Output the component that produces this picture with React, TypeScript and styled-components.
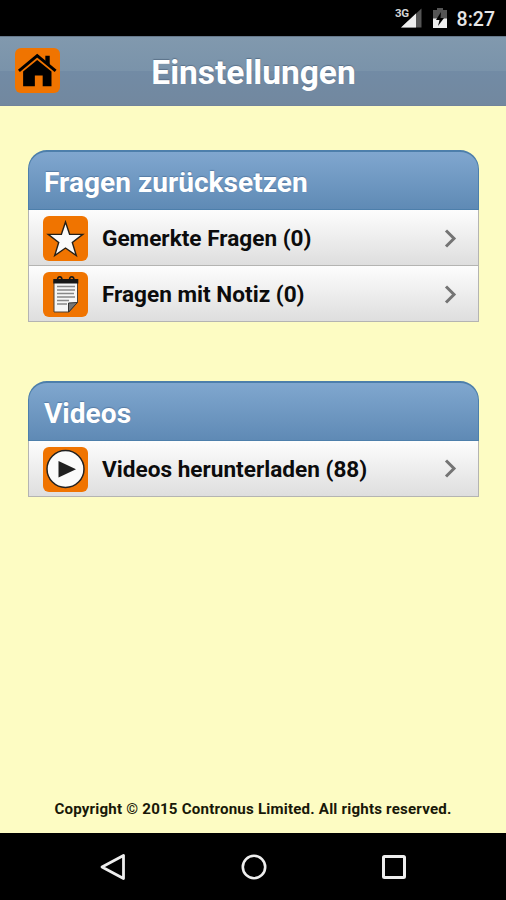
import React from 'react';
import styled, { createGlobalStyle } from 'styled-components';

const GlobalStyle = createGlobalStyle`
  * { box-sizing: border-box; }
  html, body { margin: 0; padding: 0; background: #fdfcc3; }
  body { font-family: Roboto, "Liberation Sans", sans-serif; font-weight: 700; }
  svg { display: block; flex: none; }
`;

const Screen = styled.div`
  display: flex;
  flex-direction: column;
  width: 506px;
  height: 900px;
  overflow: hidden;
  background: #fdfcc3;
`;

const StatusBar = styled.div`
  flex: none;
  display: flex;
  align-items: center;
  justify-content: flex-end;
  height: 36px;
  padding: 0 11px 0 0;
  background: #000;
`;

const NetworkType = styled.span`
  align-self: flex-start;
  margin: 7px -8px 0 0;
  font-size: 11.5px;
  line-height: 12px;
  letter-spacing: -0.4px;
  color: #d4d4d4;
`;

const Clock = styled.span`
  margin: 3px 0 0 10px;
  font-size: 19.5px;
  font-weight: 500;
  line-height: 36px;
  color: #e6e6e6;
`;

const Toolbar = styled.header`
  flex: none;
  display: flex;
  align-items: center;
  height: 70px;
  padding: 0 14px;
  border-top: 1px solid #66788b;
  border-bottom: 1px solid #71839b;
  background: linear-gradient(#8199ae 0, #7a93aa 34px, #728ba5 34px, #72889f 100%);
`;

const IconTile = styled.span`
  flex: none;
  display: block;
  width: 45px;
  height: 45px;
  border-radius: 6px;
  background: #f07400;
`;

const HomeButton = styled(IconTile)`
  margin: 0 0 1px 1px;
`;

const Title = styled.h1`
  flex: 1;
  margin: 3px 45px 0 -1px;
  padding-left: 1px;
  font-size: 33.5px;
  line-height: 40px;
  font-weight: 700;
  text-align: center;
  color: #fff;
  text-shadow: 0 -1px 1px rgba(60, 80, 105, 0.5);
`;

const Content = styled.main`
  flex: 1;
  display: flex;
  flex-direction: column;
  gap: 58.5px;
  padding: 44px 27px 0 28px;
`;

const Group = styled.section`
  display: flex;
  flex-direction: column;
`;

const GroupHeader = styled.h2`
  height: 60px;
  margin: 0;
  padding: 2px 15px 0;
  border: 1px solid #4d7fab;
  border-top-width: 2px;
  border-radius: 19px 19px 0 0;
  background: linear-gradient(#80a7cf, #5f8ab5);
  font-size: 28.1px;
  line-height: 58px;
  font-weight: 700;
  color: #fff;
  text-shadow: 0 -1px 1px rgba(50, 85, 125, 0.45);
`;

const Row = styled.div`
  display: flex;
  align-items: center;
  height: 56px;
  padding: 2px 21px 0 14px;
  border: 1px solid #b4b4b2;
  border-top: 0;
  background: linear-gradient(#fdfdfd, #dedede);
`;

const RowLabel = styled.span`
  flex: 1;
  margin: 1px 0 0 14px;
  font-size: 22.6px;
  line-height: 28px;
  font-weight: 700;
  color: #0c0c0c;
`;

const Footer = styled.footer`
  flex: none;
  height: 37px;
  padding-top: 3px;
  font-size: 15.1px;
  line-height: 20px;
  letter-spacing: 0.2px;
  text-align: center;
  color: #181808;
`;

const NavBar = styled.nav`
  flex: none;
  display: flex;
  align-items: center;
  justify-content: space-between;
  height: 67px;
  padding: 0 96px 0 97px;
  background: #000;
`;

const HomeIcon = () => (
  <svg width="45" height="45" viewBox="0 0 46 46">
    <path d="M31 8h4.500v11l-4.500-4z" />
    <path d="M4 23.500 22.700 7.800 41.500 23.500" fill="none" stroke="#000" strokeWidth="3" />
    <path d="M8.300 24 22.700 12.200 37.300 24v15h-9V28h-8v11h-12z" />
  </svg>
);

const StarIcon = () => (
  <svg width="45" height="45" viewBox="0 0 45 45">
    <path
      d="m22.500 6 4.100 12.200 13.200.2-10.500 8 4 13.200-10.800-7.600-10.800 7.600 4-13.200-10.500-8 13.200-.2z"
      fill="#fafafa"
      stroke="#252018"
      strokeWidth="1.400"
    />
  </svg>
);

const NoteIcon = () => (
  <svg width="45" height="45" viewBox="0 0 45 45">
    <path d="M11 8.500h23.500V30L26 40H11z" fill="#f6f6f6" stroke="#4d4135" strokeWidth="1" />
    <path d="M10.300 7h25v4.500h-25z" fill="#171717" />
    <path d="M14.500 8c0-4.500 4.500-4.500 4.500 0M26.500 8c0-4.500 4.500-4.500 4.500 0" fill="none" stroke="#171717" strokeWidth="1.500" />
    <path d="M14 14.500h18M14 18h18M14 21.500h17M14 25h18M14 28.500h12M14 32h10" stroke="#888" strokeWidth="1.300" />
    <path d="M34.500 30.500 25.500 40v-9z" fill="#777" stroke="#333" strokeWidth="1" />
  </svg>
);

const PlayIcon = () => (
  <svg width="45" height="45" viewBox="0 0 45 45">
    <circle cx="22.500" cy="22" r="18.500" fill="#fbfbfb" stroke="#222" strokeWidth="1.500" />
    <path d="M15.500 14v16.500l17.500-8.200z" fill="#202020" />
  </svg>
);

const Chevron = () => (
  <svg width="14" height="20" viewBox="0 0 14 20">
    <path d="m3 1.500 8 8-8 8" fill="none" stroke="#747474" strokeWidth="3" />
  </svg>
);

const SignalIcon = () => (
  <svg width="21" height="20" viewBox="0 0 21 20">
    <path d="M20.500.500v19H0z" fill="#555" />
    <path d="M15 5.500v14H0z" fill="#eee" />
  </svg>
);

const BatteryIcon = () => (
  <svg width="14" height="20" viewBox="0 0 14 20">
    <path d="M4 0h6v2h4v18H0V2h4z" fill="#555" />
    <path d="M0 10.500h14V20H0z" fill="#eee" />
    <path d="M8 4 3 12h3.500L5 18l6-8H7.500z" fill="#000" />
  </svg>
);

const groups = [
  {
    title: 'Fragen zurücksetzen',
    rows: [
      { label: 'Gemerkte Fragen (0)', Icon: StarIcon },
      { label: 'Fragen mit Notiz (0)', Icon: NoteIcon },
    ],
  },
  { title: 'Videos', rows: [{ label: 'Videos herunterladen (88)', Icon: PlayIcon }] },
];

const BatterySlot = styled.span`
  margin-left: 11px;
`;

export default function App() {
  return (
    <Screen>
      <GlobalStyle />
      <StatusBar>
        <NetworkType>3G</NetworkType>
        <SignalIcon />
        <BatterySlot><BatteryIcon /></BatterySlot>
        <Clock>8:27</Clock>
      </StatusBar>
      <Toolbar>
        <HomeButton><HomeIcon /></HomeButton>
        <Title>Einstellungen</Title>
      </Toolbar>
      <Content>
        {groups.map(({ title, rows }) => (
          <Group key={title}>
            <GroupHeader>{title}</GroupHeader>
            {rows.map(({ label, Icon }) => (
              <Row key={label}>
                <IconTile><Icon /></IconTile>
                <RowLabel>{label}</RowLabel>
                <Chevron />
              </Row>
            ))}
          </Group>
        ))}
      </Content>
      <Footer>Copyright © 2015 Contronus Limited. All rights reserved.</Footer>
      <NavBar>
        <svg width="32" height="32" viewBox="0 0 32 32">
          <path d="M26.500 4.500v23L5 16z" fill="none" stroke="#eee" strokeWidth="2.800" strokeLinejoin="round" />
        </svg>
        <svg width="32" height="32" viewBox="0 0 32 32">
          <circle cx="16" cy="16" r="11.200" fill="none" stroke="#eee" strokeWidth="2.600" />
        </svg>
        <svg width="32" height="32" viewBox="0 0 32 32">
          <rect x="5.500" y="5.500" width="21" height="21" rx="1" fill="none" stroke="#eee" strokeWidth="3" />
        </svg>
      </NavBar>
    </Screen>
  );
}
